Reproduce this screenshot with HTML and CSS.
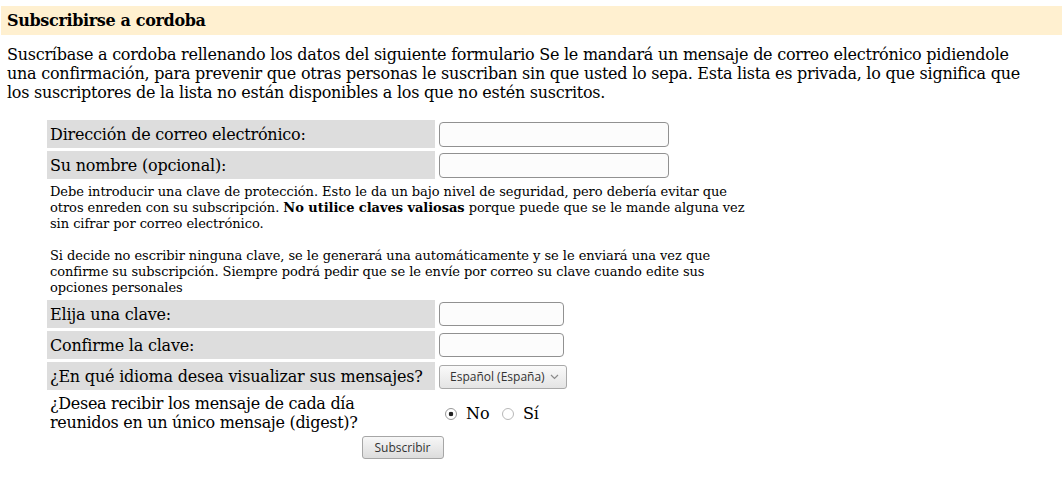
FILE: index.html
```
<!DOCTYPE html>
<html lang="es">
<head>
<meta charset="utf-8">
<title>Subscribirse a cordoba</title>
<link rel="stylesheet" href="styles.css">
</head>
<body>
<div class="page">
  <div class="band">Subscribirse a cordoba</div>
  <p class="intro">Suscríbase a cordoba rellenando los datos del siguiente formulario Se le mandará un mensaje de correo electrónico pidiendole una confirmación, para prevenir que otras personas le suscriban sin que usted lo sepa. Esta lista es privada, lo que significa que los suscriptores de la lista no están disponibles a los que no estén suscritos.</p>
  <form class="form">
    <div class="label">Dirección de correo electrónico:</div>
    <div class="field"><input class="text wide" type="text"></div>
    <div class="label">Su nombre (opcional):</div>
    <div class="field"><input class="text wide" type="text"></div>
    <div class="help">
      <p>Debe introducir una clave de protección. Esto le da un bajo nivel de seguridad, pero debería evitar que otros enreden con su subscripción. <b>No utilice claves valiosas</b> porque puede que se le mande alguna vez sin cifrar por correo electrónico.</p>
      <p>Si decide no escribir ninguna clave, se le generará una automáticamente y se le enviará una vez que confirme su subscripción. Siempre podrá pedir que se le envíe por correo su clave cuando edite sus opciones personales</p>
    </div>
    <div class="label">Elija una clave:</div>
    <div class="field"><input class="text short" type="password"></div>
    <div class="label">Confirme la clave:</div>
    <div class="field"><input class="text short" type="password"></div>
    <div class="label">¿En qué idioma desea visualizar sus mensajes?</div>
    <div class="field">
      <span class="selectwrap">
        <select class="select"><option>Español (España)</option></select>
        <svg class="chev" width="9" height="6" viewBox="0 0 9 6"><path d="M1 1 L4.5 4.5 L8 1" fill="none" stroke="#8a8a8a" stroke-width="1.2"/></svg>
      </span>
    </div>
    <div class="plain">¿Desea recibir los mensaje de cada día<br>reunidos en un único mensaje (digest)?</div>
    <div class="field radios">
      <span class="choice"><input class="radio" type="radio" name="digest" checked> No <input class="radio second" type="radio" name="digest"> Sí</span>
    </div>
    <div class="submitrow"><button class="btn" type="button">Subscribir</button></div>
  </form>
</div>
</body>
</html>
```
FILE: styles.css
```
html, body {
  margin: 0;
  background: #fff;
}
body {
  font-family: "DejaVu Serif", serif;
  font-size: 16px;
  color: #000;
}
.page {
  padding: 6px 0 0 1px;
}
.band {
  background: #fff0d0;
  padding: 5px 6px;
  font-weight: bold;
  letter-spacing: -0.35px;
}
.intro {
  margin: 10px 0 0;
  padding-left: 6px;
  width: 1025px;
  letter-spacing: -0.25px;
}
.form {
  display: grid;
  grid-template-columns: 388px 1fr;
  column-gap: 2px;
  row-gap: 3px;
  width: 713px;
  margin: 18px 0 0 46px;
}
.label {
  background: #dddddd;
  min-height: 28px;
  padding: 0 3px;
  display: flex;
  align-items: center;
  letter-spacing: -0.2px;
}
.field {
  padding: 0 2px;
  display: flex;
  align-items: center;
}
.text {
  box-sizing: border-box;
  border: 1px solid #919191;
  border-radius: 4px;
  background: #fcfcfc;
  margin: 0;
  padding: 2px 4px;
}
.wide {
  width: 230px;
  height: 25px;
}
.short {
  width: 125px;
  height: 24px;
}
.help {
  grid-column: 1 / -1;
  font-size: 13px;
  line-height: 16px;
  padding: 2px 3px 1px;
  letter-spacing: -0.05px;
}
.help p {
  margin: 0;
}
.help p + p {
  margin-top: 16px;
}
.selectwrap {
  position: relative;
  display: inline-block;
}
.select {
  appearance: none;
  -webkit-appearance: none;
  box-sizing: border-box;
  width: 128px;
  height: 24px;
  margin: 1px 0 0;
  padding: 0 0 0 10px;
  border: 1px solid #a9a9a9;
  border-radius: 3px;
  background: linear-gradient(#fafafa, #e4e4e4);
  font-family: "Open Sans", "Noto Sans", sans-serif;
  font-size: 12px;
  color: #333;
}
.chev {
  position: absolute;
  right: 8px;
  top: 10px;
  pointer-events: none;
}
.plain {
  padding: 1px 3px 2px;
  letter-spacing: -0.3px;
}
.radios {
  font-size: 16px;
}
.choice {
  display: inline-block;
}
.radio {
  appearance: none;
  -webkit-appearance: none;
  width: 12px;
  height: 12px;
  box-sizing: border-box;
  border: 1px solid #b8b8b8;
  border-radius: 50%;
  background: #fff;
  margin: 0 4px 0 6px;
  vertical-align: -1px;
}
.radio:checked {
  border-color: #999;
  background: radial-gradient(circle, #222 0 2px, #fff 2.6px);
}
.radio.second {
  margin-left: 7px;
}
.submitrow {
  grid-column: 1 / -1;
  display: flex;
  justify-content: center;
  margin-top: -1px;
}
.btn {
  box-sizing: border-box;
  width: 82px;
  height: 23px;
  margin: 0 0 0 -2px;
  padding: 0;
  border: 1px solid #a6a6a6;
  border-radius: 3px;
  background: linear-gradient(#f7f7f7, #dcdcdc);
  font-family: "Open Sans", "Noto Sans", sans-serif;
  font-size: 12px;
  color: #333;
}
```
